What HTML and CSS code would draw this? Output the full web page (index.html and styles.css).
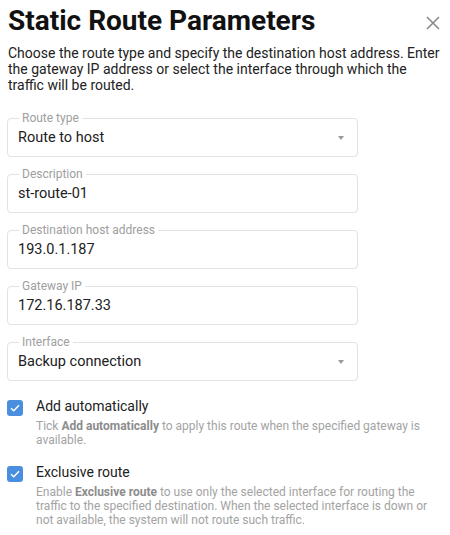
FILE: index.html
```html
<!DOCTYPE html>
<html lang="en">
<head>
<meta charset="utf-8">
<title>Static Route Parameters</title>
<link rel="stylesheet" href="styles.css">
</head>
<body>
<div class="dialog">
  <header class="head">
    <h1 class="title">Static Route Parameters</h1>
    <button class="close" aria-label="Close">
      <svg width="14" height="14" viewBox="0 0 14 14"><path d="M1 1L13 13M13 1L1 13" stroke="#8a8a8a" stroke-width="1.6" fill="none"/></svg>
    </button>
  </header>
  <p class="intro">Choose the route type and specify the destination host address. Enter the gateway IP address or select the interface through which the traffic will be routed.</p>

  <div class="fields">
    <div class="field">
      <span class="label">Route type</span>
      <span class="value">Route to host</span>
      <span class="arrow"></span>
    </div>
    <div class="field">
      <span class="label">Description</span>
      <span class="value">st-route-01</span>
    </div>
    <div class="field">
      <span class="label">Destination host address</span>
      <span class="value">193.0.1.187</span>
    </div>
    <div class="field">
      <span class="label">Gateway IP</span>
      <span class="value">172.16.187.33</span>
    </div>
    <div class="field">
      <span class="label">Interface</span>
      <span class="value">Backup connection</span>
      <span class="arrow"></span>
    </div>
  </div>

  <div class="checks">
    <div class="check">
      <span class="box"><svg width="10" height="8" viewBox="0 0 10 8"><path d="M1 4.2L3.8 6.8L9 1.2" stroke="#fff" stroke-width="1.4" fill="none"/></svg></span>
      <div class="check-text">
        <div class="check-label">Add automatically</div>
        <div class="check-desc">Tick <b>Add automatically</b> to apply this route when the specified gateway is available.</div>
      </div>
    </div>
    <div class="check">
      <span class="box"><svg width="10" height="8" viewBox="0 0 10 8"><path d="M1 4.2L3.8 6.8L9 1.2" stroke="#fff" stroke-width="1.4" fill="none"/></svg></span>
      <div class="check-text">
        <div class="check-label">Exclusive route</div>
        <div class="check-desc">Enable <b>Exclusive route</b> to use only the selected interface for routing the traffic to the specified destination. When the selected interface is down or not available, the system will not route such traffic.</div>
      </div>
    </div>
  </div>
</div>
</body>
</html>
```

FILE: styles.css
```css
* { box-sizing: border-box; }
html, body { margin: 0; padding: 0; background: #fff; }
body { font-family: Roboto, "Liberation Sans", sans-serif; color: #212121; }

.dialog { width: 450px; padding: 5px 0 0 7px; }

.head { display: flex; align-items: flex-start; justify-content: space-between; }
.title { margin: 0; padding-left: 1px; font-size: 28px; font-weight: 700; line-height: 32px; color: #111; }
.close { border: 0; background: none; padding: 0; margin: 11px 10px 0 0; width: 14px; height: 14px; display: flex; cursor: pointer; }

.intro { margin: 8px 0 0; padding-left: 1px; padding-right: 8px; font-size: 14px; line-height: 16px; color: #222; }

.fields { margin-top: 25px; width: 351px; display: flex; flex-direction: column; gap: 17px; }
.field { position: relative; height: 39px; border: 1px solid #e2e2e2; border-radius: 4px; display: flex; align-items: center; padding: 0 10px; }
.label { position: absolute; top: -8px; left: 11px; padding: 0 3px; background: #fff; font-size: 12px; line-height: 14px; color: #9e9e9e; }
.value { font-size: 14.5px; color: #212121; }
.arrow { position: absolute; right: 13px; top: 17px; width: 0; height: 0; border-left: 3.5px solid transparent; border-right: 3.5px solid transparent; border-top: 4px solid #9a9a9a; }

.checks { margin-top: 16px; display: flex; flex-direction: column; gap: 16px; }
.check { display: grid; grid-template-columns: 16px 1fr; column-gap: 13px; }
.box { width: 16px; height: 16px; margin-top: 3px; border-radius: 3px; background: #4a8fdf; display: flex; align-items: center; justify-content: center; }
.check-label { font-size: 14px; line-height: 18px; color: #212121; }
.check-desc { margin-top: 4px; padding-right: 20px; font-size: 12px; line-height: 14px; color: #a3a3a3; }
.check-desc b { color: #8c8c8c; font-weight: 700; }
```
